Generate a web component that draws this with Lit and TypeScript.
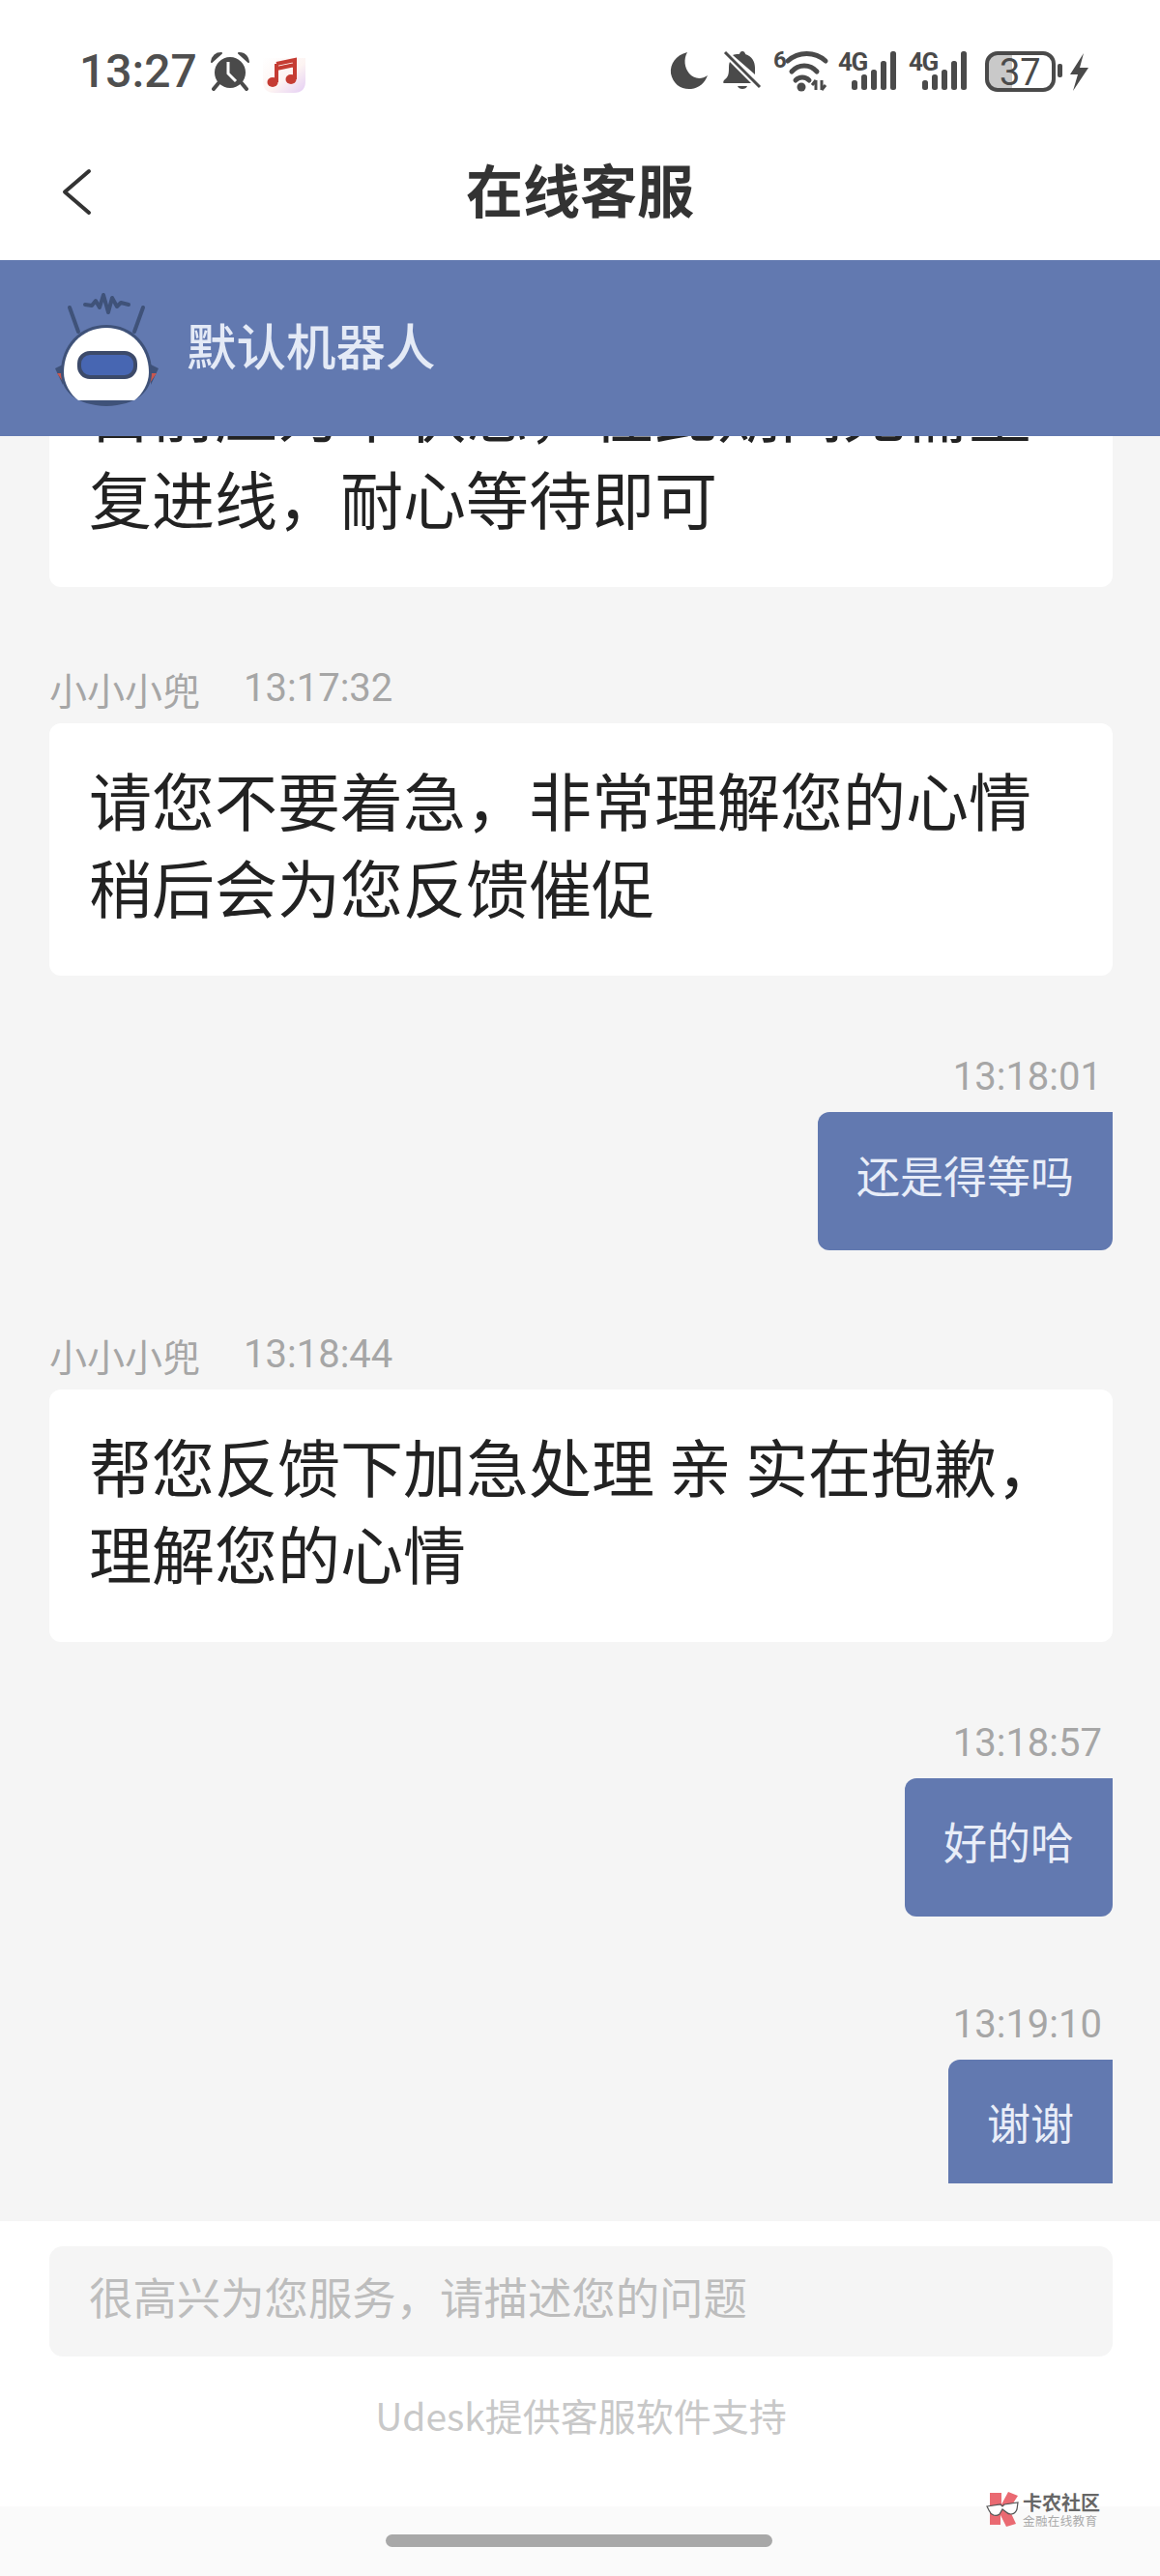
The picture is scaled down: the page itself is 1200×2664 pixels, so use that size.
import { LitElement, html, css } from "lit";
import { customElement } from "lit/decorators.js";

const signal = (cls: string) => html`<svg class="sig ${cls}" width="62" height="42" viewBox="0 0 62 42">
  <text x="0" y="20" class="sigtext">4G</text>
  <rect x="14" y="30" width="6" height="10" rx="2.5" fill="#4a4a4a"></rect>
  <rect x="24" y="24" width="6" height="16" rx="2.5" fill="#4a4a4a"></rect>
  <rect x="34" y="19" width="6" height="21" rx="2.5" fill="#4a4a4a"></rect>
  <rect x="44" y="10" width="6" height="30" rx="2.5" fill="#4a4a4a"></rect>
  <rect x="54" y="0" width="6" height="40" rx="2.5" fill="#4a4a4a"></rect>
</svg>`;

type Msg = { side: "l" | "r"; name?: string; time: string; lines: string[]; clip?: boolean; gap: string };

const messages: Msg[] = [
  { side: "l", name: "小小小兜", time: "13:17:32", lines: ["请您不要着急，非常理解您的心情", "稍后会为您反馈催促"], gap: "g77" },
  { side: "r", time: "13:18:01", lines: ["还是得等吗"], gap: "g77" },
  { side: "l", name: "小小小兜", time: "13:18:44", lines: ["帮您反馈下加急处理 亲 实在抱歉，", "理解您的心情"], gap: "g80" },
  { side: "r", time: "13:18:57", lines: ["好的哈"], gap: "g77" },
  { side: "r", time: "13:19:10", lines: ["谢谢"], clip: true, gap: "g84" },
];

@customElement("app-root")
export class AppRoot extends LitElement {
  static styles = css`
    :host {
      display: flex;
      flex-direction: column;
      width: 1200px;
      height: 2664px;
      background: #fff;
      overflow: hidden;
      font-family: "Noto Sans CJK SC", "Noto Sans", sans-serif;
    }
    svg { overflow: visible; }
    .status {
      height: 135px;
      flex: none;
      display: flex;
      align-items: flex-start;
      justify-content: space-between;
      padding: 53px 73px 0 82px;
      box-sizing: border-box;
      color: #4a4a4a;
    }
    .status-left, .status-right { display: flex; align-items: flex-start; }
    .time {
      font: 500 48px/42px Roboto, sans-serif;
      color: #4f4f4f;
      width: 135px;
    }
    .alarm { margin-top: 1px; }
    .music { margin: 7px 0 0 13px; }
    .bell { margin-left: 15px; }
    .wifi { margin-left: 12px; }
    .sig { display: block; margin-left: 11px; }
    .batt { margin-left: 17px; }
    .sigtext { font: 700 26px Roboto, sans-serif; fill: #4a4a4a; letter-spacing: -1.5px; }
    .six { font: 700 24px Roboto, sans-serif; fill: #4a4a4a; }
    .batt-text { font: 400 38px Roboto, sans-serif; fill: #4a4a4a; }
    .nav {
      height: 134px;
      flex: none;
      display: flex;
      align-items: center;
      justify-content: center;
      position: relative;
      padding-bottom: 14px;
      box-sizing: border-box;
    }
    .back { position: absolute; left: 65px; top: 40px; }
    .title { font-size: 59px; font-weight: 700; color: #333; line-height: 80px; }
    .header {
      height: 182px;
      flex: none;
      background: #6279b0;
      display: flex;
      align-items: center;
      gap: 25px;
      padding-left: 55px;
      box-sizing: border-box;
      position: relative;
      z-index: 1;
    }
    .avatar { margin-top: 6px; flex: none; }
    .hname { font-size: 51.5px; font-weight: 500; color: #e4eaf6; line-height: 70px; margin-bottom: 9px; }
    .chat {
      flex: 1;
      min-height: 0;
      background: #f5f5f5;
      display: flex;
      flex-direction: column;
      padding: 0 49px 39px 51px;
      box-sizing: border-box;
    }
    .scroll {
      flex: 1;
      min-height: 0;
      overflow: hidden;
      display: flex;
      flex-direction: column;
      justify-content: flex-end;
    }
    .msg { flex: none; display: flex; flex-direction: column; }
    .msg.r { align-items: flex-end; }
    .meta {
      display: flex;
      gap: 45px;
      font-size: 39px;
      line-height: 56px;
      color: #a6a6a6;
      margin-bottom: 8px;
    }
    .g77 .meta { margin-top: 77px; }
    .g80 .meta { margin-top: 80px; }
    .g84 .meta { margin-top: 84px; }
    .msg.r .meta { padding-right: 11px; }
    .meta .t { font-family: Roboto, sans-serif; font-size: 40px; }
    .bubble {
      background: #fff;
      border-radius: 12px;
      padding: 33px 40px 48px 41px;
      font-size: 65px;
      line-height: 90px;
      color: #222;
      white-space: pre;
      align-self: stretch;
    }
    .msg.r .bubble {
      align-self: flex-end;
      background: #6279b0;
      color: #e8edf8;
      font-size: 45px;
      line-height: 62px;
      padding: 34px 40px 47px;
      border-radius: 12px 0 12px 12px;
    }
    .msg.r .bubble.clip {
      border-radius: 12px 0 0 0;
      height: 128px;
      box-sizing: border-box;
    }
    .composer {
      height: 367px;
      flex: none;
      background: #fff;
      padding: 26px 49px 0 51px;
      box-sizing: border-box;
      display: flex;
      flex-direction: column;
      position: relative;
    }
    .input {
      height: 114px;
      background: #f5f5f5;
      border-radius: 14px;
      padding: 0 0 12px 41px;
      box-sizing: border-box;
      display: flex;
      align-items: center;
      font-size: 45.4px;
      color: #bdbdbd;
      flex: none;
    }
    .support {
      margin-top: 32px;
      text-align: center;
      font-size: 39px;
      line-height: 56px;
      color: #c8c8c8;
    }
    .gesture {
      position: absolute;
      left: 0;
      right: 0;
      bottom: 0;
      height: 72px;
      background: #fafafa;
    }
    .homebar {
      position: absolute;
      left: 399px;
      top: 29px;
      width: 400px;
      height: 13px;
      border-radius: 7px;
      background: #a8a8a8;
    }
    .mark {
      position: absolute;
      left: 1020px;
      top: 2577px;
      display: flex;
      gap: 4px;
    }
    .mark-text { display: flex; flex-direction: column; }
    .mk1 { font-size: 20px; line-height: 22px; font-weight: 700; color: #666; }
    .mk2 { font-size: 12.5px; line-height: 14px; color: #aaa; letter-spacing: 0.4px; margin-top: 1px; }
  `;

  render() {
    return html`
      <div class="status">
        <div class="status-left">
          <span class="time">13:27</span>
          <svg class="alarm" width="42" height="40" viewBox="0 0 42 40">
            <path d="M2 10 C3 4 7 1 12 1 L2 10Z M40 10 C39 4 35 1 30 1 L40 10Z" fill="#4a4a4a" stroke="#4a4a4a" stroke-width="2" stroke-linejoin="round"></path>
            <path d="M9 32 L4 38 M33 32 L38 38" stroke="#4a4a4a" stroke-width="4" stroke-linecap="round"></path>
            <circle cx="21" cy="21" r="16" fill="#4a4a4a"></circle>
            <path d="M19 10 L19 22 L27 30" fill="none" stroke="#fff" stroke-width="3"></path>
          </svg>
          <svg class="music" width="44" height="36" viewBox="0 0 44 36">
            <defs>
              <linearGradient id="mg" x1="0" y1="0" x2="1" y2="1">
                <stop offset="0" stop-color="#ffffff"></stop>
                <stop offset="0.55" stop-color="#fdf4f2"></stop>
                <stop offset="1" stop-color="#e4cdf4"></stop>
              </linearGradient>
            </defs>
            <path d="M0 0 H44 V24 Q44 36 32 36 H12 Q0 36 0 24Z" fill="url(#mg)"></path>
            <path d="M14 6 L33 2 L33 22 M14 6 L14 25 M14 6 L14 11 L33 7" fill="none" stroke="#c53c33" stroke-width="4"></path>
            <ellipse cx="10" cy="25" rx="5.5" ry="5" fill="#c53c33"></ellipse>
            <ellipse cx="29" cy="22" rx="5.5" ry="5" fill="#c53c33"></ellipse>
          </svg>
        </div>
        <div class="status-right">
          <svg width="40" height="40" viewBox="0 0 40 40">
            <path d="M18 1 C6 4 0 13 1 23 C3 34 12 40 22 39 C30 38 36 33 39 25 C32 30 24 28 20 23 C15 17 14 8 18 1Z" fill="#4a4a4a"></path>
          </svg>
          <svg class="bell" width="40" height="42" viewBox="0 0 40 42">
            <path d="M20 0 C22 0 23 2 23 3 C30 5 33 11 33 17 L33 24 L10 4 C12 3 14 3 17 3 C17 2 18 0 20 0Z" fill="#4a4a4a"></path>
            <path d="M7 11 L29 33 L1 33 C0 33 0 31 1 30 C5 27 6 24 6 18 C6 15 6 13 7 11Z" fill="#4a4a4a"></path>
            <path d="M15 36 L25 36 C24 40 16 40 15 36Z" fill="#4a4a4a"></path>
            <path d="M2 1 L38 37" stroke="#4a4a4a" stroke-width="3"></path>
          </svg>
          <svg class="wifi" width="56" height="42" viewBox="0 0 56 42">
            <text x="0" y="17" class="six">6</text>
            <path d="M15 10 C26 0 43 0 54 10" fill="none" stroke="#4a4a4a" stroke-width="5" stroke-linecap="round"></path>
            <path d="M19 21 C26 13 38 13 45 21" fill="none" stroke="#4a4a4a" stroke-width="5" stroke-linecap="round"></path>
            <path d="M23 30 C27 26 33 26 37 30" fill="none" stroke="#4a4a4a" stroke-width="5" stroke-linecap="round"></path>
            <circle cx="29" cy="37" r="4.5" fill="#4a4a4a"></circle>
            <path d="M44 30 L44 40 M44 30 L40 35 M50 30 L50 40 M50 40 L54 35" fill="none" stroke="#4a4a4a" stroke-width="3"></path>
          </svg>
          ${signal("s1")}
          ${signal("s2")}
          <svg class="batt" width="108" height="42" viewBox="0 0 108 42">
            <path d="M4 4 H28 V38 H4Z" fill="#c9c9c9"></path>
            <rect x="2" y="2" width="69" height="38" rx="11" fill="none" stroke="#4a4a4a" stroke-width="4"></rect>
            <text x="15" y="35" class="batt-text">37</text>
            <rect x="75" y="13" width="5" height="14" rx="2" fill="#4a4a4a"></rect>
            <path d="M102 2 L88 24 L96 24 L91 41 L107 17 L98 17Z" fill="#4a4a4a"></path>
          </svg>
        </div>
      </div>
      <div class="nav">
        <svg class="back" width="30" height="48" viewBox="0 0 30 48">
          <path d="M27 2 L2 23.5 L27 45" fill="none" stroke="#333" stroke-width="4" stroke-linecap="round" stroke-linejoin="round"></path>
        </svg>
        <div class="title">在线客服</div>
      </div>
      <div class="header">
        <svg class="avatar" width="113" height="125" viewBox="0 0 113 125">
          <path d="M17 17 L26 42 M93 17 L84 42" stroke="#3f5279" stroke-width="4" stroke-linecap="round"></path>
          <path d="M33 14 L40 15 L44 10 L48 17 L52 4 L57 22 L61 7 L66 16 L70 12 L78 14" fill="none" stroke="#3f5279" stroke-width="4" stroke-linejoin="round" stroke-linecap="round"></path>
          <path d="M2 80 L10 76 L10 97 Z M109 80 L101 76 L101 97 Z" fill="#3f5279"></path>
          <path d="M4 85 L10 85 L11 95 Z M107 85 L101 85 L100 95 Z" fill="#c8574f"></path>
          <path d="M8 84 C8 56 28 35 55 35 C82 35 102 56 102 84 C102 104 86 118 55 119 C24 118 8 104 8 84Z" fill="#3f5279"></path>
          <path d="M11 84 C11 58 30 38 55 38 C80 38 99 58 99 84 C99 96 92 107 84 113 L26 113 C18 107 11 96 11 84Z" fill="#fff"></path>
          <rect x="27" y="64" width="58" height="25" rx="11" fill="#4766b2" stroke="#3c4a6a" stroke-width="4"></rect>
        </svg>
        <div class="hname">默认机器人</div>
      </div>
      <div class="chat">
        <div class="scroll">
          <div class="msg l">
            <div class="bubble">目前应为平状态，在此期间无需重
复进线，耐心等待即可</div>
          </div>
          ${messages.map(
            (m) => html`<div class="msg ${m.side} ${m.gap}">
              <div class="meta">
                ${m.name ? html`<span>${m.name}</span>` : ""}
                <span class="t">${m.time}</span>
              </div>
              <div class="bubble ${m.clip ? "clip" : ""}">${m.lines.join("\n")}</div>
            </div>`
          )}
        </div>
      </div>
      <div class="composer">
        <div class="input">很高兴为您服务，请描述您的问题</div>
        <div class="support">Udesk提供客服软件支持</div>
        <div class="gesture"><div class="homebar"></div></div>
      </div>
      <div class="mark">
        <svg width="34" height="36" viewBox="0 0 34 36">
          <path d="M4 1 L16 1 L16 13 L23 0 L33 4 L24 18 L31 33 L21 36 L15 24 L15 34 L4 34Z" fill="#ea6a72"></path>
          <path d="M1 15 L15 13 L17 15 L19 13 L33 11 L32 18 C30 24 24 24 21 21 L17 18 L14 23 C10 26 5 24 3 19Z" fill="#fff" stroke="#555" stroke-width="1.2"></path>
        </svg>
        <div class="mark-text">
          <div class="mk1">卡农社区</div>
          <div class="mk2">金融在线教育</div>
        </div>
      </div>
    `;
  }
}
